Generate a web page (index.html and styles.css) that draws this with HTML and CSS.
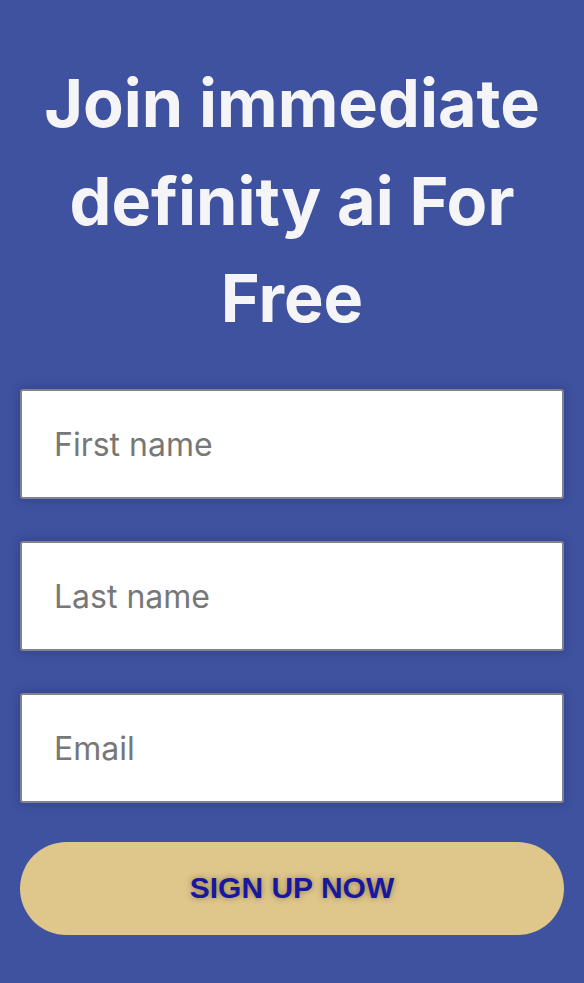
FILE: index.html
```html
<!DOCTYPE html>
<html lang="en">
<head>
<meta charset="utf-8">
<title>Join</title>
<link rel="stylesheet" href="styles.css">
</head>
<body>
<main class="signup">
  <h1 class="title">Join immediate definity ai For Free</h1>
  <form class="form">
    <input class="field" type="text" placeholder="First name">
    <input class="field" type="text" placeholder="Last name">
    <input class="field" type="email" placeholder="Email">
    <button class="cta" type="button">SIGN UP NOW</button>
  </form>
</main>
</body>
</html>
```
FILE: styles.css
```css
html, body {
  margin: 0;
  padding: 0;
  background: #3f52a0;
}
body {
  font-family: Inter, "Noto Sans", sans-serif;
}
.signup {
  padding: 55px 20px 48px;
}
.title {
  margin: 0 0 41px;
  text-align: center;
  color: #f5f5f7;
  font-size: 66.5px;
  line-height: 97.5px;
  font-weight: 700;
}
.form {
  display: flex;
  flex-direction: column;
  gap: 42px;
}
.field {
  box-sizing: border-box;
  width: 100%;
  height: 110px;
  margin: 0;
  padding: 2px 32px 0;
  border: 2px solid #80838f;
  border-radius: 3px;
  background: #fff;
  font-family: Inter, sans-serif;
  font-size: 32px;
  color: #333;
  box-shadow: 0 0 12px rgba(20, 30, 80, 0.35);
  outline: none;
}
.field::placeholder {
  color: #777;
}
.cta {
  height: 93px;
  margin: -3px 0 0;
  border: none;
  border-radius: 47px;
  background: #dfc78c;
  color: #1717a0;
  font-family: "Liberation Sans", Arial, sans-serif;
  font-weight: 700;
  font-size: 30px;
  text-shadow: 0 0 6px rgba(90, 70, 30, 0.6);
  cursor: pointer;
}
```
